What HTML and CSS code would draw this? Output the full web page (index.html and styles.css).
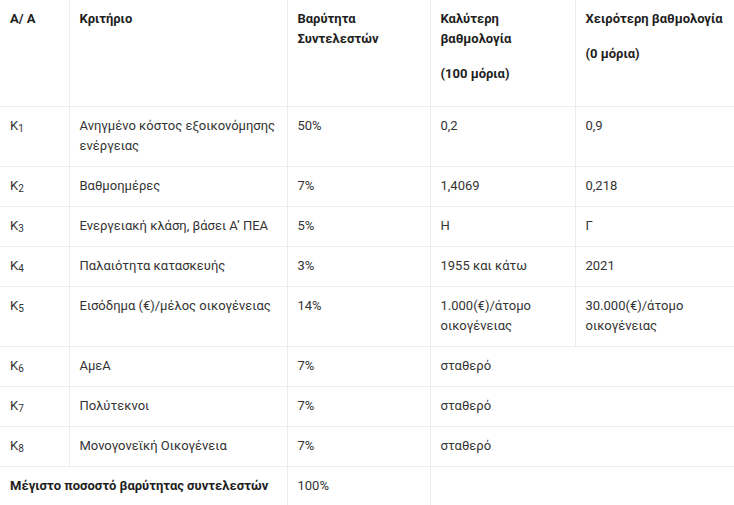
FILE: index.html
```html
<!DOCTYPE html>
<html lang="el">
<head>
<meta charset="utf-8">
<title>Κριτήρια</title>
<link rel="stylesheet" href="styles.css">
</head>
<body>
<table class="crit">
  <colgroup>
    <col class="c1"><col class="c2"><col class="c3"><col class="c4"><col class="c5">
  </colgroup>
  <thead>
    <tr>
      <th><p>Α/ Α</p></th>
      <th><p>Κριτήριο</p></th>
      <th><p>Βαρύτητα Συντελεστών</p></th>
      <th><p>Καλύτερη βαθμολογία</p><p>(100 μόρια)</p></th>
      <th><p>Χειρότερη βαθμολογία</p><p>(0 μόρια)</p></th>
    </tr>
  </thead>
  <tbody>
    <tr><td>Κ<sub>1</sub></td><td>Ανηγμένο κόστος εξοικονόμησης ενέργειας</td><td>50%</td><td>0,2</td><td>0,9</td></tr>
    <tr><td>Κ<sub>2</sub></td><td>Βαθμοημέρες</td><td>7%</td><td>1,4069</td><td>0,218</td></tr>
    <tr><td>Κ<sub>3</sub></td><td>Ενεργειακή κλάση, βάσει Α’ ΠΕΑ</td><td>5%</td><td>Η</td><td>Γ</td></tr>
    <tr><td>Κ<sub>4</sub></td><td>Παλαιότητα κατασκευής</td><td>3%</td><td>1955 και κάτω</td><td>2021</td></tr>
    <tr><td>Κ<sub>5</sub></td><td>Εισόδημα (€)/μέλος οικογένειας</td><td>14%</td><td>1.000(€)/άτομο οικογένειας</td><td>30.000(€)/άτομο οικογένειας</td></tr>
    <tr><td>Κ<sub>6</sub></td><td>ΑμεΑ</td><td>7%</td><td colspan="2">σταθερό</td></tr>
    <tr><td>Κ<sub>7</sub></td><td>Πολύτεκνοι</td><td>7%</td><td colspan="2">σταθερό</td></tr>
    <tr><td>Κ<sub>8</sub></td><td>Μονογονεϊκή Οικογένεια</td><td>7%</td><td colspan="2">σταθερό</td></tr>
    <tr><td colspan="2" class="total">Μέγιστο ποσοστό βαρύτητας συντελεστών</td><td>100%</td><td colspan="2"></td></tr>
  </tbody>
</table>
</body>
</html>
```
FILE: styles.css
```css
html, body {
  margin: 0;
  padding: 0;
  background: #fff;
}
body {
  font-family: Roboto, "Noto Sans", sans-serif;
  font-size: 13px;
  line-height: 20px;
  color: #333;
}
.crit {
  border-collapse: collapse;
  table-layout: fixed;
  width: 734px;
  margin-top: -1px;
}
.c1 { width: 69px; }
.c2 { width: 218px; }
.c3 { width: 143px; }
.c4 { width: 145px; }
.c5 { width: 159px; }
.crit th, .crit td {
  border: 1px solid #ececec;
  padding: 9px 10px 10px 10px;
  text-align: left;
  vertical-align: top;
}
.crit tr > :first-child { border-left: none; }
.crit tr > :last-child { border-right: none; }
.crit th {
  font-weight: 700;
  color: #1e1e1e;
  padding-bottom: 7px;
}
.crit th p {
  margin: 0 0 15px 0;
}
.crit th:nth-child(3) p { padding-right: 20px; }
.crit sub {
  font-size: 10px;
  line-height: 0;
  vertical-align: -2px;
}
.crit .total {
  font-weight: 700;
  color: #1e1e1e;
}
```
